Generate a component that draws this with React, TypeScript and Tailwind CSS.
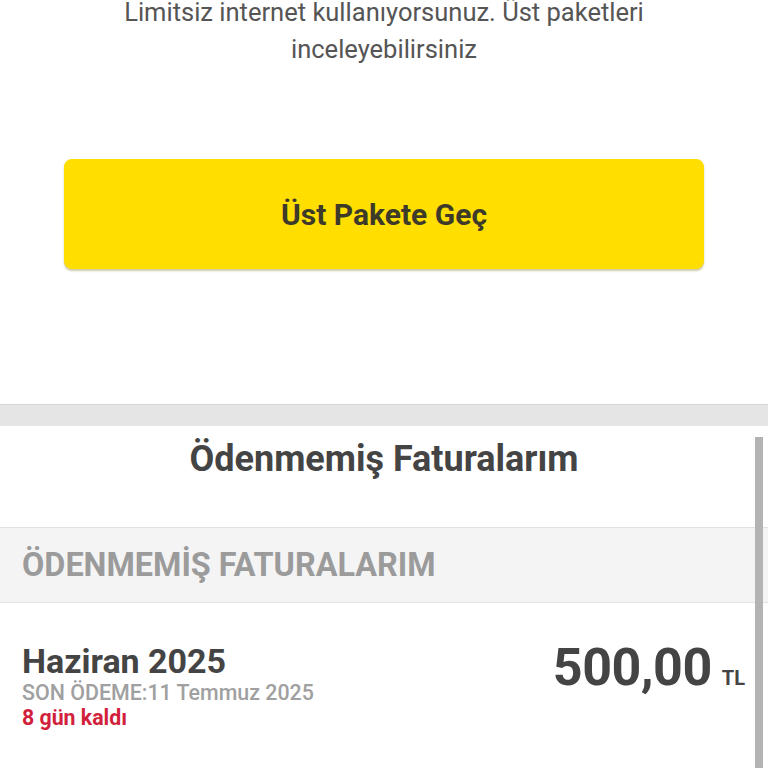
export default function App() {
  return (
    <div className="relative h-[768px] w-[768px] overflow-hidden bg-white font-['Roboto',sans-serif]">
      {/* Package info */}
      <div className="flex flex-col items-center">
        <p className="-mt-[6px] text-center text-[25.5px] leading-[37px] text-[#555555]">
          Limitsiz internet kullanıyorsunuz. Üst paketleri
          <br />
          inceleyebilirsiniz
        </p>
      </div>

      <div className="px-[64px] pt-[91px]">
        <button className="flex h-[110px] w-full items-center justify-center rounded-[8px] bg-[#ffde00] text-[30px] font-bold text-[#3d3a2a] shadow-[0_2px_2px_rgba(120,100,0,0.35)]">
          Üst Pakete Geç
        </button>
      </div>

      {/* Separator */}
      <div className="mt-[135px] h-[22px] border-t border-[#d6d6d6] bg-[#e5e5e5]" />

      {/* Unpaid bills */}
      <div className="flex h-[101px] items-start justify-center pt-[6px]">
        <h2 className="text-[36px] font-bold text-[#444444]">
          Ödenmemiş Faturalarım
        </h2>
      </div>

      <div className="flex h-[76px] items-center border-y border-[#e2e2e2] bg-[#f4f4f4] px-[22px]">
        <span className="text-[32.4px] font-bold text-[#9b9b9b]">
          ÖDENMEMİŞ FATURALARIM
        </span>
      </div>

      <div className="flex items-start justify-between pl-[22px] pr-[23px] pt-[38px]">
        <div className="flex flex-col">
          <span className="text-[34px] font-bold leading-[40px] text-[#444444]">
            Haziran 2025
          </span>
          <span className="text-[21.4px] font-medium leading-[24px] text-[#a0a0a0]">
            SON ÖDEME:11 Temmuz 2025
          </span>
          <span className="text-[21.3px] font-bold leading-[26px] text-[#d21f3c]">
            8 gün kaldı
          </span>
        </div>
        <div className="-mt-[3px] flex items-baseline gap-[10px]">
          <span className="text-[52px] font-bold leading-[60px] tracking-[-0.5px] text-[#444444]">
            500,00
          </span>
          <span className="text-[20px] font-bold text-[#444444]">TL</span>
        </div>
      </div>

      {/* Scrollbar */}
      <div className="absolute right-[5px] top-[437px] h-[331px] w-[8px] bg-[#b3b3b3]" />
    </div>
  );
}
